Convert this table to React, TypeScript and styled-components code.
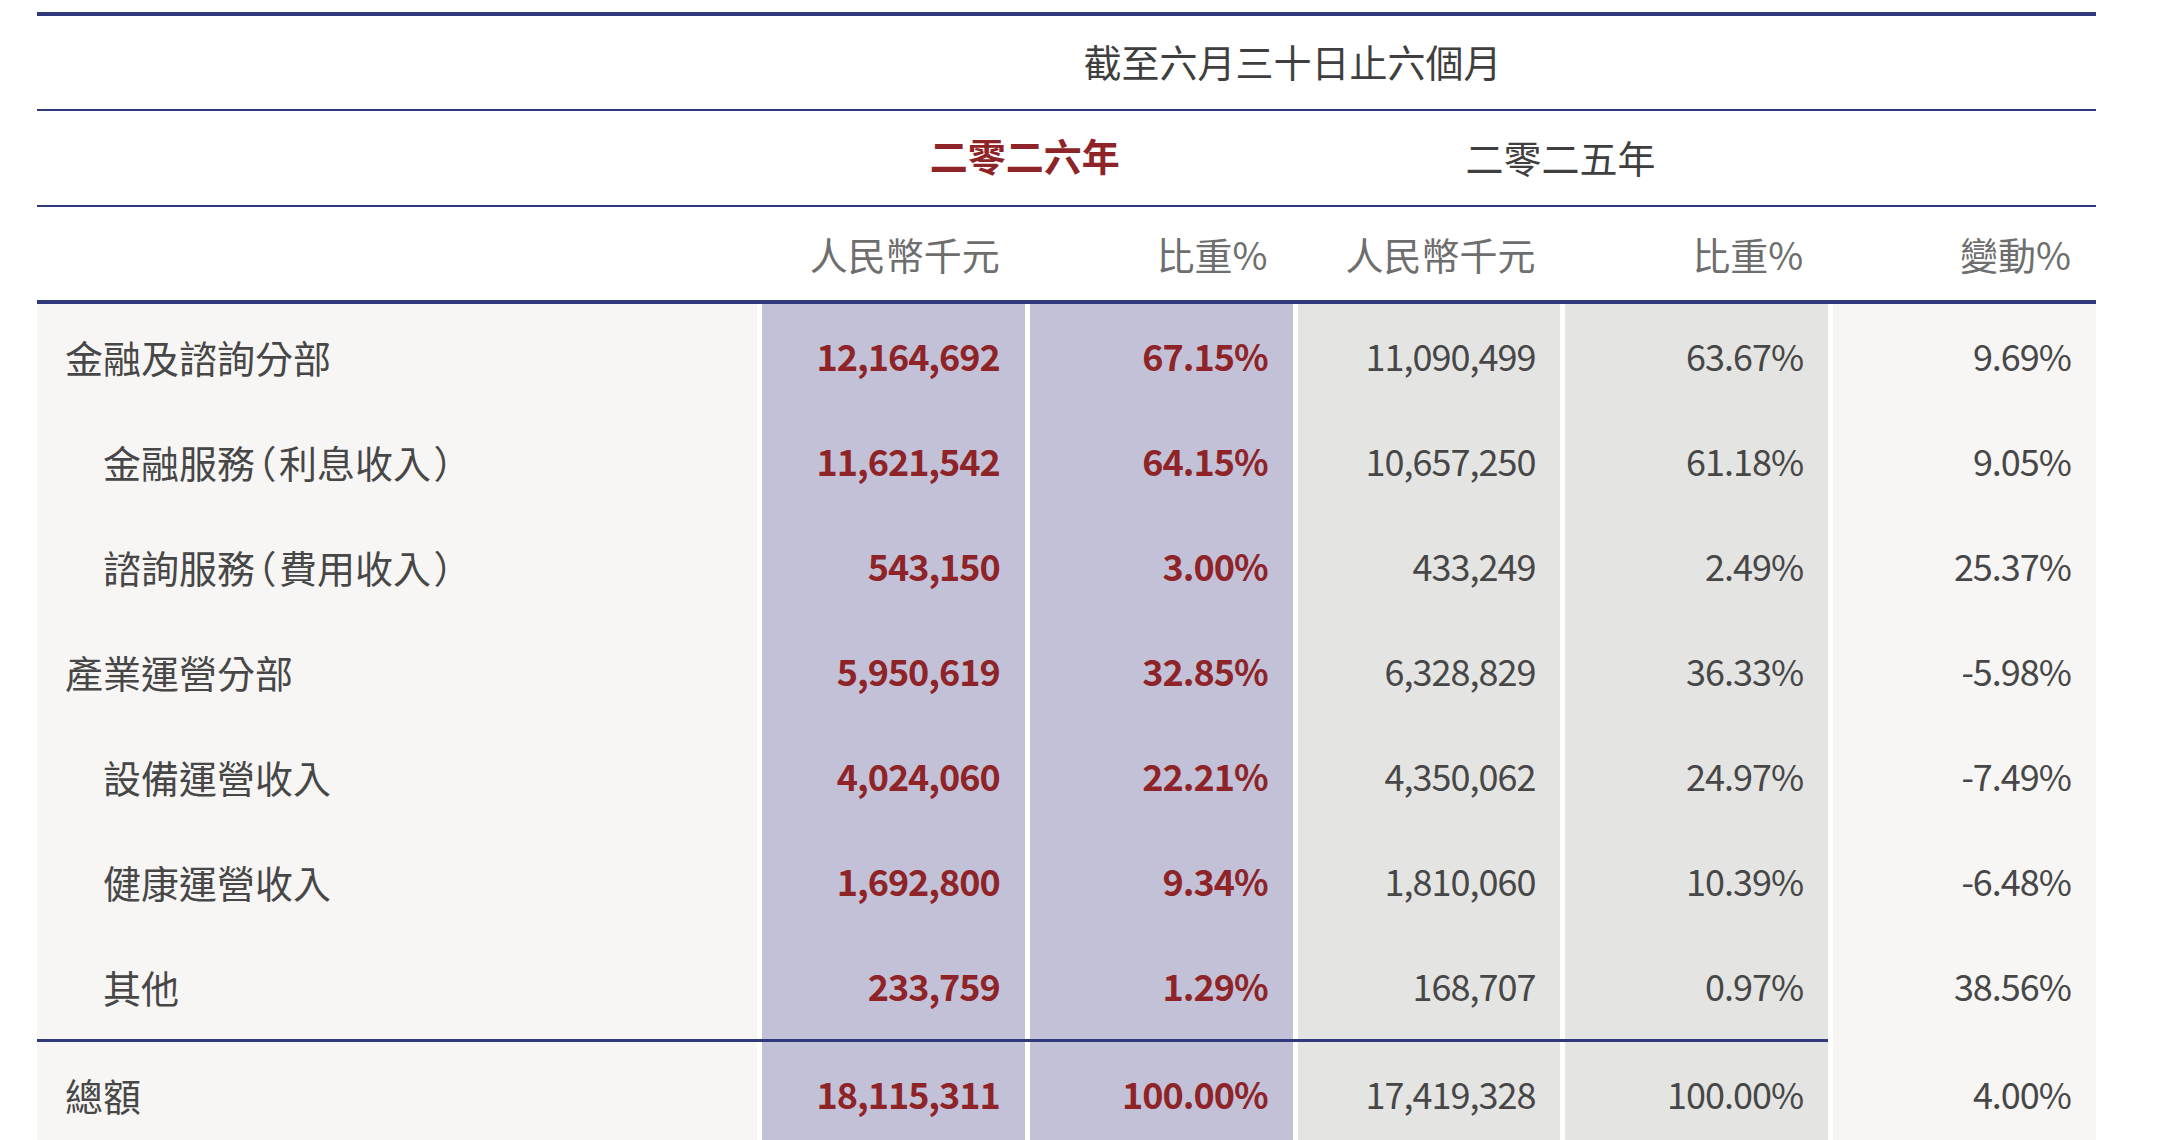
import { createGlobalStyle, styled, css } from 'styled-components'

const NAVY = '#2e3a7b'
const RED = '#8e2427'
const INK = '#474747'

type Tone = 'cur' | 'prev' | 'chg'

type Line = {
	label: string
	note?: string
	sub?: boolean
	values: [string, string, string, string, string]
}

const lines: Line[] = [
	{ label: '金融及諮詢分部', values: ['12,164,692', '67.15%', '11,090,499', '63.67%', '9.69%'] },
	{ label: '金融服務', note: '利息收入', sub: true, values: ['11,621,542', '64.15%', '10,657,250', '61.18%', '9.05%'] },
	{ label: '諮詢服務', note: '費用收入', sub: true, values: ['543,150', '3.00%', '433,249', '2.49%', '25.37%'] },
	{ label: '產業運營分部', values: ['5,950,619', '32.85%', '6,328,829', '36.33%', '-5.98%'] },
	{ label: '設備運營收入', sub: true, values: ['4,024,060', '22.21%', '4,350,062', '24.97%', '-7.49%'] },
	{ label: '健康運營收入', sub: true, values: ['1,692,800', '9.34%', '1,810,060', '10.39%', '-6.48%'] },
	{ label: '其他', sub: true, values: ['233,759', '1.29%', '168,707', '0.97%', '38.56%'] },
]

const total: Line = { label: '總額', values: ['18,115,311', '100.00%', '17,419,328', '100.00%', '4.00%'] }

const tones: Tone[] = ['cur', 'cur', 'prev', 'prev', 'chg']

const App = () => {
	return (
		<>
			<GlobalStyle />
			<Sheet>
				<HeadRow $height={93} $rule={4}>
					<Blank />
					<HeadCell $span={4}>截至六月三十日止六個月</HeadCell>
					<Blank />
				</HeadRow>
				<HeadRow $height={94} $rule={2}>
					<Blank />
					<HeadCell $span={2} $current>
						二零二六年
					</HeadCell>
					<HeadCell $span={2}>二零二五年</HeadCell>
					<Blank />
				</HeadRow>
				<HeadRow $height={93} $rule={2}>
					<Blank />
					<UnitCell>人民幣千元</UnitCell>
					<UnitCell>比重%</UnitCell>
					<UnitCell>人民幣千元</UnitCell>
					<UnitCell>比重%</UnitCell>
					<UnitCell>變動%</UnitCell>
				</HeadRow>
				<Body>
					{lines.map((line) => (
						<BodyRow key={line.label}>
							<Label $sub={line.sub}>
								{line.label}
								{line.note && (
									<>
										<Paren>（</Paren>
										{line.note}
										<Paren>）</Paren>
									</>
								)}
							</Label>
							{line.values.map((v, i) => (
								<Figure key={i} $tone={tones[i]}>
									{v}
								</Figure>
							))}
						</BodyRow>
					))}
					<RuleRow>
						<TotalRule />
						<Figure $tone="chg" $thin />
					</RuleRow>
					<BodyRow>
						<Label>{total.label}</Label>
						{total.values.map((v, i) => (
							<Figure key={i} $tone={tones[i]}>
								{v}
							</Figure>
						))}
					</BodyRow>
				</Body>
			</Sheet>
		</>
	)
}

const GlobalStyle = createGlobalStyle`
	html, body {
		margin: 0;
		padding: 0;
		background: #ffffff;
		overflow: hidden;
	}
	body {
		font-family: "Noto Sans CJK TC", "Noto Sans", sans-serif;
		color: ${INK};
	}
`

const grid = css`
	display: grid;
	grid-template-columns: 720px repeat(5, 1fr);
`

const Sheet = styled.div`
	width: 2059px;
	margin: 12px 0 0 37px;
	display: flex;
	flex-direction: column;
`

const HeadRow = styled.div<{ $height: number; $rule: number }>`
	${grid};
	height: ${(p) => p.$height}px;
	border-top: ${(p) => p.$rule}px solid ${NAVY};
`

const Blank = styled.div``

const HeadCell = styled.div<{ $span: number; $current?: boolean }>`
	grid-column: span ${(p) => p.$span};
	display: flex;
	align-items: center;
	justify-content: center;
	padding-bottom: ${(p) => (p.$current ? 6 : 3)}px;
	font-size: 38px;
	line-height: 1;
	font-weight: ${(p) => (p.$current ? 700 : 400)};
	color: ${(p) => (p.$current ? RED : '#3f3f3f')};
`

const UnitCell = styled.div`
	display: flex;
	align-items: center;
	justify-content: flex-end;
	padding: 0 25px 0 0;
	font-size: 38px;
	line-height: 1;
	color: #6e6e6e;
`

const Body = styled.div`
	display: flex;
	flex-direction: column;
	border-top: 4px solid ${NAVY};
`

const BodyRow = styled.div`
	${grid};
	height: 105px;
`

const RuleRow = styled.div`
	${grid};
	height: 3px;
`

const TotalRule = styled.div`
	grid-column: 1 / 6;
	background: ${NAVY};
`

const Label = styled.div<{ $sub?: boolean }>`
	display: flex;
	align-items: center;
	padding-left: ${(p) => (p.$sub ? 66 : 28)}px;
	background: #f7f6f4;
	font-size: 38px;
	line-height: 1;
	color: ${INK};
`

const Paren = styled.span`
	display: inline-block;
	width: 24px;
	text-align: center;
	overflow: visible;
	font-feature-settings: 'halt';
`

const toneBg: Record<Tone, string> = {
	cur: '#c3c1d7',
	prev: '#e4e4e2',
	chg: '#f7f6f4',
}

const Figure = styled.div<{ $tone: Tone; $thin?: boolean }>`
	display: flex;
	align-items: center;
	justify-content: flex-end;
	padding: 0 ${(p) => (p.$thin ? 0 : 25)}px 3px 0;
	border-left: 5px solid #ffffff;
	background: ${(p) => toneBg[p.$tone]};
	font-size: 36px;
	letter-spacing: -1px;
	line-height: 1;
	font-weight: ${(p) => (p.$tone === 'cur' ? 700 : 400)};
	color: ${(p) => (p.$tone === 'cur' ? RED : INK)};
`

export default App
